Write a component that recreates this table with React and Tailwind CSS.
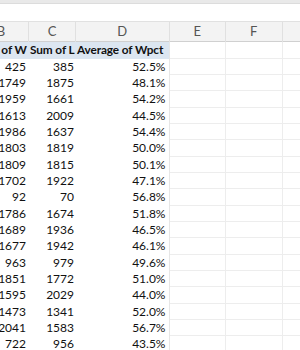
import React from 'react';

const rows = [
  [425, 385, '52.5%'],
  [1749, 1875, '48.1%'],
  [1959, 1661, '54.2%'],
  [1613, 2009, '44.5%'],
  [1986, 1637, '54.4%'],
  [1803, 1819, '50.0%'],
  [1809, 1815, '50.1%'],
  [1702, 1922, '47.1%'],
  [92, 70, '56.8%'],
  [1786, 1674, '51.8%'],
  [1689, 1936, '46.5%'],
  [1677, 1942, '46.1%'],
  [963, 979, '49.6%'],
  [1851, 1772, '51.0%'],
  [1595, 2029, '44.0%'],
  [1473, 1341, '52.0%'],
  [2041, 1583, '56.7%'],
  [722, 956, '43.5%'],
];

const cols = 'grid grid-cols-[55px_47px_93.5px_56.5px_56.5px_60px]';

export default function App() {
  return (
    <div className="w-[300px] h-[350px] overflow-hidden bg-white font-['Lato',sans-serif] text-[#111]">
      {/* ribbon edge + formula bar */}
      <div className="h-[4px] bg-[#e9e9e9] border-b border-[#dcdcdc]" />
      <div className="h-[18px] bg-white border-b border-[#e1e1e1]" />

      <div className="ml-[-26px] w-[370px]">
        {/* column letters */}
        <div className={`${cols} h-[20px] bg-[#f3f3f3] border-b border-[#d0d0d0] text-[13px] text-[#555]`}>
          {['B', 'C', 'D', 'E', 'F', ''].map((c, i) => (
            <div key={i} className="flex items-center justify-center border-r border-[#e0e0e0]">
              {c}
            </div>
          ))}
        </div>

        {/* pivot header */}
        <div className={`${cols} h-[16.6px] text-[11.8px] font-bold leading-[16.6px] tracking-[-0.1px]`}>
          <div className="bg-[#dce6f1] pl-[2px] whitespace-nowrap overflow-hidden">Sum of W</div>
          <div className="bg-[#dce6f1] pl-[1px] whitespace-nowrap overflow-hidden">Sum of L</div>
          <div className="bg-[#dce6f1] pl-[1px] whitespace-nowrap overflow-hidden border-r border-[#e6e6e6]">Average of Wpct</div>
          <div className="border-r border-b border-[#ededed]" />
          <div className="border-r border-b border-[#ededed]" />
          <div className="border-b border-[#ededed]" />
        </div>

        {/* data */}
        {rows.map(([w, l, p], i) => (
          <div key={i} className={`${cols} h-[16.35px] text-[12px] leading-[16.35px]`}>
            <div className="text-right pr-[3px]">{w}</div>
            <div className="text-right pr-[2px]">{l}</div>
            <div className="text-right pr-[3px] border-r border-[#e6e6e6]">{p}</div>
            <div className="border-r border-b border-[#ededed]" />
            <div className="border-r border-b border-[#ededed]" />
            <div className="border-b border-[#ededed]" />
          </div>
        ))}
      </div>
    </div>
  );
}
